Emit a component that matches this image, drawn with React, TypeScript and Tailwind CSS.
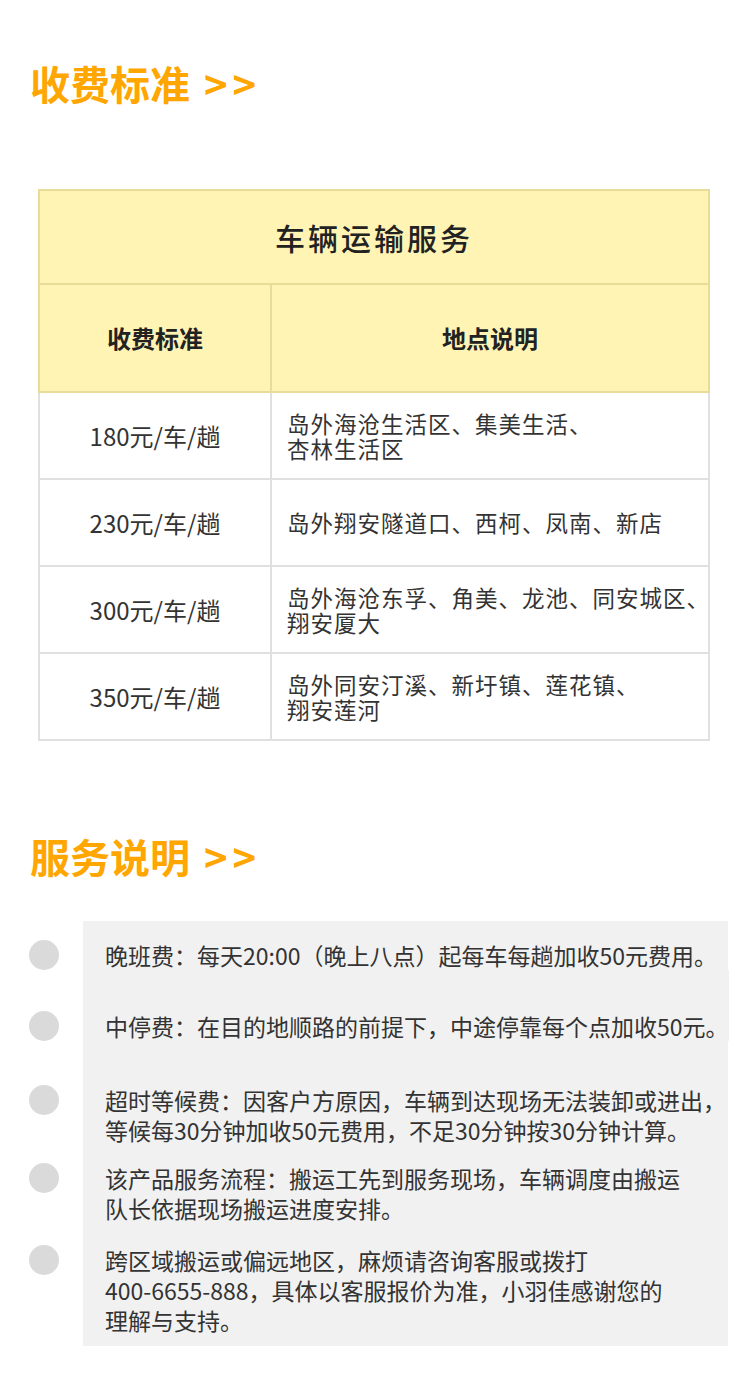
import React from "react";

const priceRows = [
  { price: "180元/车/趟", lines: ["岛外海沧生活区、集美生活、", "杏林生活区"] },
  { price: "230元/车/趟", lines: ["岛外翔安隧道口、西柯、凤南、新店"] },
  { price: "300元/车/趟", lines: ["岛外海沧东孚、角美、龙池、同安城区、", "翔安厦大"] },
  { price: "350元/车/趟", lines: ["岛外同安汀溪、新圩镇、莲花镇、", "翔安莲河"] },
];

const notes = [
  { pt: "pt-[19px]", pb: "pb-0", lines: ["晚班费：每天20:00（晚上八点）起每车每趟加收50元费用。"] },
  { pt: "pt-[41px]", pb: "pb-0", lines: ["中停费：在目的地顺路的前提下，中途停靠每个点加收50元。"] },
  {
    pt: "pt-[44px]",
    pb: "pb-0",
    lines: ["超时等候费：因客户方原因，车辆到达现场无法装卸或进出，", "等候每30分钟加收50元费用，不足30分钟按30分钟计算。"],
  },
  { pt: "pt-[18px]", pb: "pb-0", lines: ["该产品服务流程：搬运工先到服务现场，车辆调度由搬运", "队长依据现场搬运进度安排。"] },
  {
    pt: "pt-[22px]",
    pb: "pb-[11px]",
    lines: ["跨区域搬运或偏远地区，麻烦请咨询客服或拨打", "400-6655-888，具体以客服报价为准，小羽佳感谢您的", "理解与支持。"],
  },
];

const SectionTitle = ({ text }: { text: string }) => (
  <h2 className="pl-[30px] text-[40px] leading-[48px] font-bold text-[#ffa600]">
    {text}
    <span className="ml-[14px] tracking-[5px]">&gt;&gt;</span>
  </h2>
);

export default function App() {
  return (
    <div className="w-[750px] min-h-[1389px] bg-white pt-[59px] font-['Noto_Sans_CJK_SC','Noto_Sans',sans-serif] text-[#333]">
      <SectionTitle text="收费标准" />

      {/* price table */}
      <div className="mx-[38px] mt-[82px] w-[672px]">
        <div className="flex h-[96px] items-center justify-center border-2 border-[#e8dc98] bg-[#fff4b4] text-[30px] font-medium tracking-[3px] text-[#222]">
          车辆运输服务
        </div>
        <div className="grid h-[108px] grid-cols-[232px_1fr] border-x-2 border-b-2 border-[#e8dc98] bg-[#fff4b4] text-[24px] font-bold text-[#222]">
          <div className="flex items-center justify-center border-r-2 border-[#e8dc98]">收费标准</div>
          <div className="flex items-center justify-center">地点说明</div>
        </div>
        {priceRows.map((row) => (
          <div
            key={row.price}
            className="grid h-[87px] grid-cols-[232px_1fr] border-x-2 border-b-2 border-[#e0e0e0] text-[24px]"
          >
            <div className="flex items-center justify-center border-r-2 border-[#e0e0e0]">{row.price}</div>
            <div className="flex flex-col justify-center pl-[15px] text-[22.5px] leading-[25px] tracking-[1px]">
              {row.lines.map((l) => (
                <span key={l} className="whitespace-nowrap">
                  {l}
                </span>
              ))}
            </div>
          </div>
        ))}
      </div>

      <div className="mt-[91px]">
        <SectionTitle text="服务说明" />
      </div>

      {/* notes */}
      <div className="mt-[41px] flex flex-col pl-[29px] pr-[22px]">
        {notes.map((n, i) => (
          <div key={i} className="flex">
            <div className={`w-[54px] shrink-0 ${n.pt}`}>
              <div className="h-[30px] w-[30px] rounded-full bg-[#dadada]" />
            </div>
            <div className={`flex-1 bg-[#f1f1f1] pl-[22px] text-[23px] leading-[30px] ${n.pt} ${n.pb}`}>
              {n.lines.map((l) => (
                <div key={l} className="whitespace-nowrap">
                  {l}
                </div>
              ))}
            </div>
          </div>
        ))}
      </div>
    </div>
  );
}
